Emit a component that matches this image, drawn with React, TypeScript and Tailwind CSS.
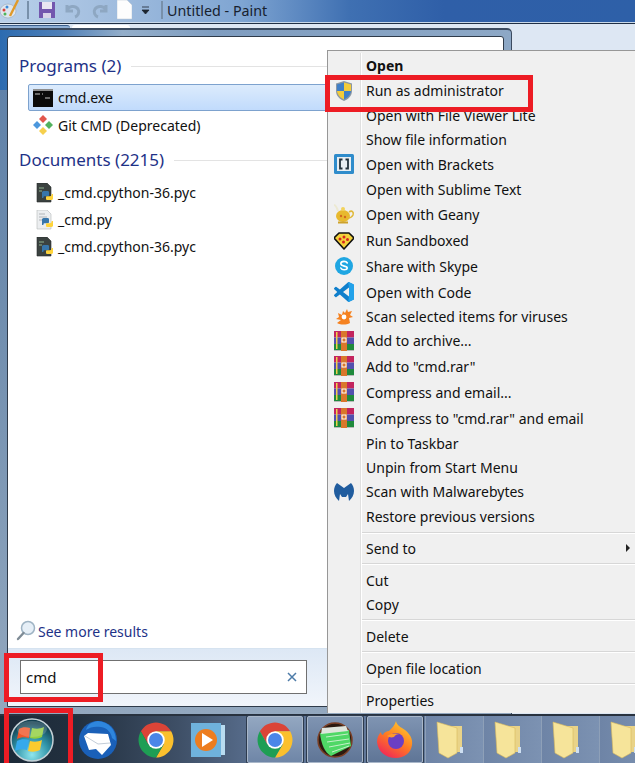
import React from 'react';

const sans = 'font-["Noto_Sans","Open_Sans",sans-serif]';

const Chrome = ({ size = 36 }: { size?: number }) => (
  <svg width={size} height={size} viewBox="0 0 48 48">
    <path d="M6.7 14A20 20 0 0 1 41.3 14L24 14 15.3 29Z" fill="#db4437" />
    <path d="M41.3 14A20 20 0 0 1 24 44L32.7 29 24 14Z" fill="#fbc02d" />
    <path d="M24 44A20 20 0 0 1 6.7 14L15.3 29 32.7 29Z" fill="#1e9e54" />
    <circle cx="24" cy="24" r="10" fill="#fff" />
    <circle cx="24" cy="24" r="8" fill="#4a86e8" />
  </svg>
);

const Folder = () => (
  <svg width="28" height="38" viewBox="0 0 28 38">
    <path d="M9 5h17v26H9z" fill="#e9d388" />
    <path d="M24 26h3v6h-3z" fill="#cfe0f2" />
    <path d="M1 1l20 6v25l-9 5-9-5z" fill="#f6e49a" stroke="#d9b95c" strokeWidth="0.6" />
  </svg>
);

const PyFile = ({ dark }: { dark?: boolean }) => (
  <svg width="18" height="20" viewBox="0 0 18 20">
    <path d="M1 0h10l4 4v15H1z" fill={dark ? '#3b4240' : '#eceef0'} stroke={dark ? '#2a2e2d' : '#b5b8bb'} strokeWidth="0.6" />
    {!dark && <path d="M3 4h6M3 7h8M3 10h4" stroke="#b0b4b8" />}
    {dark && <path d="M3 5h5M3 8h3" stroke="#8fb28f" />}
    <path d="M6 14V9.5c0-1 1-1.5 2.5-1.5h3c1 0 1.5.5 1.5 1.5V12c0 .8-.6 1.2-1.4 1.2H9c-1 0-1.6.4-1.6 1.3V15H6z" fill="#3776ab" />
    <path d="M17 11v4.500c0 1-1 1.500-2.500 1.500h-3c-1 0-1.500-.5-1.500-1.500V14c0-.5.5-.8 1.200-.8H14c1 0 1.600-.6 1.600-1.400V11H17z" fill="#ffd43b" />
  </svg>
);

const Rar = () => (
  <svg width="20" height="20" viewBox="0 0 20 20">
    <rect x="0" y="0" width="20" height="6.500" fill="#c3245e" />
    <rect x="0" y="6.500" width="20" height="6.500" fill="#5250ae" />
    <rect x="0" y="13" width="20" height="6" fill="#1f8a3c" />
    <rect x="0" y="19" width="20" height="1" fill="#b9b9b9" />
    <rect x="2" y="1" width="1.500" height="17" fill="#f2d04a" />
    <rect x="7" y="0" width="6" height="20" fill="#d9772b" />
    <rect x="8" y="7" width="4" height="4" fill="none" stroke="#fff" />
  </svg>
);

const Shield = () => (
  <svg width="18" height="20" viewBox="0 0 18 20">
    <path d="M9 0l8 2.500V10c0 5-4 8.500-8 10-4-1.500-8-5-8-10V2.500z" fill="#8b97a3" />
    <path d="M9 1.500V10H2V3.500z" fill="#3f7fc8" />
    <path d="M9 1.500V10h7V3.500z" fill="#f3cb3a" />
    <path d="M9 10v8.500C5.500 17 2.500 14 2 10z" fill="#f3cb3a" />
    <path d="M9 10v8.500c3.500-1.500 6.500-4.500 7-8.500z" fill="#3f7fc8" />
  </svg>
);

const Brackets = () => (
  <svg width="20" height="20" viewBox="0 0 20 20">
    <rect width="20" height="20" rx="1.500" fill="#2f8ccb" />
    <rect x="3" y="3" width="14" height="14" fill="#e8eef2" />
    <path d="M8.500 5.500H6v9h2.500M11.500 5.500H14v9h-2.500" fill="none" stroke="#23323c" strokeWidth="1.800" />
  </svg>
);

const Geany = () => (
  <svg width="22" height="20" viewBox="0 0 22 20">
    <path d="M1 1c2 0 3 3 4 6" fill="none" stroke="#ece9d2" strokeWidth="2" />
    <ellipse cx="10" cy="12" rx="7" ry="6" fill="#e8b92e" />
    <path d="M16 8c3-2 5 0 4 3-1 2-3 3-5 3" fill="none" stroke="#e0b93a" strokeWidth="1.600" />
    <circle cx="10" cy="5" r="2" fill="#f2d35c" />
    <circle cx="8" cy="12" r="1.200" fill="#d2691e" />
    <circle cx="12" cy="13" r="1.200" fill="#d2691e" />
    <rect x="5" y="17.500" width="10" height="2" fill="#cda22c" />
  </svg>
);

const Sandboxie = () => (
  <svg width="20" height="20" viewBox="0 0 20 20">
    <path d="M10 19L0 8l5-5h10l5 5z" fill="#f4d23c" stroke="#111" strokeWidth="1.600" strokeLinejoin="round" />
    <g fill="#d7261e">
      <circle cx="10" cy="7" r="1.500" />
      <circle cx="6" cy="9" r="1.500" />
      <circle cx="13.500" cy="9.500" r="1.500" />
      <circle cx="9.500" cy="12" r="1.500" />
    </g>
  </svg>
);

const Skype = () => (
  <svg width="18" height="18" viewBox="0 0 18 18">
    <circle cx="9" cy="9" r="9" fill="#1fa6e2" />
    <path d="M12.300 6c-.6-1.100-1.800-1.600-3.300-1.600-1.800 0-3.200.9-3.200 2.400 0 3 6.400 1.700 6.400 4.300 0 1.100-1.200 1.700-3.100 1.700-1.500 0-2.700-.6-3.300-1.800" fill="none" stroke="#fff" strokeWidth="1.600" strokeLinecap="round" />
  </svg>
);

const VsCode = () => (
  <svg width="20" height="20" viewBox="0 0 24 24">
    <path
      d="M23.15 2.587L18.21.21a1.494 1.494 0 0 0-1.705.29l-9.46 8.63-4.12-3.128a.999.999 0 0 0-1.276.057L.327 7.261A1 1 0 0 0 .326 8.74L3.899 12 .326 15.26a1 1 0 0 0 .001 1.479L1.65 17.94a.999.999 0 0 0 1.276.057l4.12-3.128 9.46 8.63a1.492 1.492 0 0 0 1.704.29l4.942-2.377A1.5 1.5 0 0 0 24 20.06V3.939a1.5 1.5 0 0 0-.85-1.352zm-5.146 14.861L10.826 12l7.178-5.448v10.896z"
      fill="#0f7fcc"
    />
    <path d="M17 .3l1.200-.1 4.950 2.390A1.500 1.500 0 0 1 24 3.940v16.120a1.500 1.500 0 0 1-.85 1.350l-4.940 2.380-1.200-.1 1-6.240V6.550z" fill="#22a2ea" />
  </svg>
);

const Avast = () => (
  <svg width="18" height="16" viewBox="0 0 18 16">
    <path d="M12 0l1 3 4-1-2 4 3 2-4 1 1 5c-4 2-9 2-13 0l4-3-5-1 3-2-1-4 4 2 1-4 2 2z" fill="#f58220" />
    <circle cx="9" cy="8" r="2.400" fill="#fff" />
  </svg>
);

const Malwarebytes = () => (
  <svg width="20" height="18" viewBox="0 0 20 18">
    <path d="M3 0l7 5 7-5c2 2 3 5 3 8 0 4-2 7-5 10l-1-7-2 3H8l-2-3-1 7C2 15 0 12 0 8c0-3 1-6 3-8z" fill="#205c9e" />
  </svg>
);

const CmdIcon = () => (
  <svg width="20" height="18" viewBox="0 0 20 18">
    <rect width="20" height="18" fill="#0b0b0b" />
    <rect x="0" y="0" width="20" height="2" fill="#8d8d8d" />
    <path d="M2 5h5M9 5h1M12 9h5" stroke="#c8c8c8" strokeWidth="1.200" />
  </svg>
);

const GitIcon = () => (
  <svg width="20" height="20" viewBox="0 0 20 20">
    <path d="M10 0l4 4-4 4-4-4z" fill="#e2574c" />
    <path d="M16 6l4 4-4 4-4-4z" fill="#52b25f" />
    <path d="M10 12l4 4-4 4-4-4z" fill="#f6d04d" />
    <path d="M4 6l4 4-4 4-4-4z" fill="#4c97dd" />
  </svg>
);

const menuItems: { label?: string; h: string; icon?: React.ReactNode; bold?: boolean; arrow?: boolean }[] = [
  { label: 'Open', h: 'h-[25px]', bold: true },
  { label: 'Run as administrator', h: 'h-[25px]', icon: <Shield /> },
  { label: 'Open with File Viewer Lite', h: 'h-[24px]' },
  { label: 'Show file information', h: 'h-[24px]' },
  { label: 'Open with Brackets', h: 'h-[26px]', icon: <Brackets /> },
  { label: 'Open with Sublime Text', h: 'h-[24px]' },
  { label: 'Open with Geany', h: 'h-[26px]', icon: <Geany /> },
  { label: 'Run Sandboxed', h: 'h-[26px]', icon: <Sandboxie /> },
  { label: 'Share with Skype', h: 'h-[26px]', icon: <Skype /> },
  { label: 'Open with Code', h: 'h-[26px]', icon: <VsCode /> },
  { label: 'Scan selected items for viruses', h: 'h-[23px]', icon: <Avast /> },
  { label: 'Add to archive...', h: 'h-[25px]', icon: <Rar /> },
  { label: 'Add to "cmd.rar"', h: 'h-[26px]', icon: <Rar /> },
  { label: 'Compress and email...', h: 'h-[26px]', icon: <Rar /> },
  { label: 'Compress to "cmd.rar" and email', h: 'h-[26px]', icon: <Rar /> },
  { label: 'Pin to Taskbar', h: 'h-[24px]' },
  { label: 'Unpin from Start Menu', h: 'h-[24px]' },
  { label: 'Scan with Malwarebytes', h: 'h-[25px]', icon: <Malwarebytes /> },
  { label: 'Restore previous versions', h: 'h-[25px]' },
  { h: 'h-[7px]' },
  { label: 'Send to', h: 'h-[24px]', arrow: true },
  { h: 'h-[8px]' },
  { label: 'Cut', h: 'h-[24px]' },
  { label: 'Copy', h: 'h-[24px]' },
  { h: 'h-[8px]' },
  { label: 'Delete', h: 'h-[24px]' },
  { h: 'h-[8px]' },
  { label: 'Open file location', h: 'h-[24px]' },
  { h: 'h-[8px]' },
  { label: 'Properties', h: 'h-[24px]' },
];

const ContextMenu = () => (
  <div className="absolute left-[327px] top-[50px] flex h-[663px] w-[308px] flex-col overflow-hidden border-t border-l border-[#979797] bg-[#f0f0f0] pt-[2px]">
    {menuItems.map((item, i) => (
      <div key={i} className={`flex shrink-0 ${item.h}`}>
        <div className="flex w-[33px] shrink-0 items-center justify-center border-r border-[#e0e0e0]">{item.icon}</div>
        {item.label ? (
          <div className="flex flex-1 items-center justify-between border-l border-white pl-[4px] pr-[5px]">
            <span className={`text-[14px] text-[#111] ${item.bold ? 'font-bold' : ''}`}>{item.label}</span>
            {item.arrow && <span className="h-0 w-0 border-y-[4px] border-l-[4px] border-y-transparent border-l-[#222]" />}
          </div>
        ) : (
          <div className="flex flex-1 items-center border-l border-white">
            <div className="h-[2px] w-full border-t border-b border-t-[#d7d7d7] border-b-white" />
          </div>
        )}
      </div>
    ))}
    <div className="flex flex-1">
      <div className="w-[33px] shrink-0 border-r border-[#e0e0e0]" />
    </div>
  </div>
);

const SectionHeading = ({ label, className }: { label: string; className: string }) => (
  <div className={`flex h-[26px] items-center gap-[10px] ${className}`}>
    <span className="whitespace-nowrap text-[17px] text-[#1e3287]">{label}</span>
    <div className="h-px flex-1 bg-[#e3e3e3]" />
  </div>
);

const ResultRow = ({ icon, label, className }: { icon: React.ReactNode; label: string; className: string }) => (
  <div className={`ml-[9px] flex h-[27px] items-center text-[14px] text-[#111] ${className}`}>
    <span className="flex w-[30px] shrink-0 items-center justify-center pl-[3px]">{icon}</span>
    <span>{label}</span>
  </div>
);

const StartMenu = () => (
  <div className="h-full w-[512px] rounded-tr-[5px] border-t-2 border-r border-[#3b4b60] pt-[6px] pr-[7px] pb-[7px] pl-[7px] [background:linear-gradient(90deg,#2c6bb0_0%,#4f80b8_12%,#93aeca_24%,#7f9dc0_42%,#8da8c6_100%)_0_0/100%_60px_no-repeat,linear-gradient(180deg,#5c7fa8_0%,#6f8dae_40%,#93a8bf_100%)]">
    <div className="flex h-full flex-col overflow-hidden rounded-t-[3px] border border-[#2f3b4a] bg-white">
      <div className="flex flex-1 flex-col pt-[16px] pl-[11px]">
        <SectionHeading label="Programs (2)" className="" />
        <div className="mt-[5px] ml-[9px] flex h-[27px] items-center rounded-[2px] border border-[#7da2ce] bg-[linear-gradient(180deg,#dcebfc_0%,#c1dbfc_100%)] text-[14px] text-[#111]">
          <span className="ml-[4px] mr-[5px] flex w-[20px] justify-center"><CmdIcon /></span>
          <span>cmd.exe</span>
        </div>
        <div className="mt-[1px] ml-[9px] flex h-[26px] items-center text-[14px] text-[#111]">
          <span className="ml-[5px] flex w-[20px] justify-center"><GitIcon /></span>
          <span className="ml-[5px]">Git CMD (Deprecated)</span>
        </div>
        <SectionHeading label="Documents (2215)" className="mt-[9px]" />
        <ResultRow icon={<PyFile dark />} label="_cmd.cpython-36.pyc" className="mt-[6px]" />
        <ResultRow icon={<PyFile />} label="_cmd.py" className="" />
        <ResultRow icon={<PyFile dark />} label="_cmd.cpython-36.pyc" className="" />
        <div className="mt-auto mb-[5px] flex h-[24px] items-center text-[14px] text-[#1e3287]">
          <svg className="-ml-[3px] mr-[2px]" width="20" height="22" viewBox="0 0 20 22">
            <circle cx="12" cy="8" r="6.500" fill="#e6eff7" stroke="#9fb4c4" strokeWidth="1.500" />
            <path d="M7.500 13L2 19" stroke="#7f8c96" strokeWidth="2.400" strokeLinecap="round" />
          </svg>
          <span>See more results</span>
        </div>
      </div>
      <div className="h-[58px] border-t border-[#d6e3f0] bg-[linear-gradient(180deg,#dde8f5_0%,#f1f5fb_100%)] pt-[11px] pl-[12px]">
        <div className="flex h-[34px] w-[287px] items-center justify-between border border-[#707070] bg-white pr-[8px] pl-[5px]">
          <span className="text-[15px] text-[#111]">cmd</span>
          <svg width="12" height="12" viewBox="0 0 12 12">
            <path d="M2 2l8 8M10 2l-8 8" stroke="#4d7ba8" strokeWidth="1.500" />
          </svg>
        </div>
      </div>
    </div>
  </div>
);

const TitleBar = () => (
  <div className="flex h-[24px] shrink-0 items-center border-b border-[#1f2f44] bg-[linear-gradient(90deg,#b9d0ea_0%,#a5c0e0_15%,#7fa5d2_38%,#3f70b2_55%,#2f5fa8_70%,#2e60a8_100%)] pb-[3px] shadow-[inset_0_-1px_0_#c9d9ea]">
    <svg className="mr-[7px]" width="20" height="20" viewBox="0 0 20 20">
      <ellipse cx="8" cy="11" rx="8" ry="7" fill="#dfe6ee" stroke="#9aa8b8" strokeWidth="0.600" />
      <circle cx="4" cy="10" r="1.500" fill="#d9413b" />
      <circle cx="7" cy="7" r="1.500" fill="#3b88d8" />
      <circle cx="5" cy="14" r="1.500" fill="#4eb45a" />
      <path d="M18 0L10 16" stroke="#e09a2a" strokeWidth="2.400" />
    </svg>
    <div className="h-[18px] w-[2px] bg-[#7890aa]" />
    <svg className="ml-[9px]" width="18" height="18" viewBox="0 0 18 18">
      <path d="M1 1h16v16H1z" fill="#7357ae" />
      <rect x="4" y="1" width="10" height="7" fill="#e9e6f2" />
      <rect x="5" y="12" width="8" height="5" fill="#d9d4e8" />
    </svg>
    <svg className="ml-[8px]" width="18" height="18" viewBox="0 0 18 18">
      <path d="M3 4v6h6M3 9c2-4 8-5 11-1 2 3 0 7-3 8" fill="none" stroke="#8ea7c2" strokeWidth="3" />
    </svg>
    <svg className="ml-[9px]" width="18" height="18" viewBox="0 0 18 18">
      <path d="M15 4v6H9M15 9c-2-4-8-5-11-1-2 3 0 7 3 8" fill="none" stroke="#8ea7c2" strokeWidth="3" />
    </svg>
    <svg className="ml-[8px]" width="15" height="20" viewBox="0 0 15 20">
      <path d="M0 0h10l5 5v14H0z" fill="#fdfdfd" stroke="#b8c4d0" strokeWidth="0.500" />
    </svg>
    <svg className="ml-[9px]" width="9" height="9" viewBox="0 0 9 9">
      <path d="M1 1h7M1 4h7L4.500 8z" fill="#1c2530" stroke="#1c2530" strokeWidth="0.800" />
    </svg>
    <div className="ml-[11px] h-[18px] w-[2px] bg-[#7890aa]" />
    <span className="ml-[4px] mt-[1px] text-[14.300px] text-[#17212e]">Untitled - Paint</span>
  </div>
);

const Orb = () => (
  <svg width="44" height="44" viewBox="0 0 44 44">
    <defs>
      <radialGradient id="orb" cx="50%" cy="85%" r="75%">
        <stop offset="0%" stopColor="#8fe6ee" />
        <stop offset="55%" stopColor="#2f93a8" />
        <stop offset="100%" stopColor="#123f50" />
      </radialGradient>
    </defs>
    <circle cx="22" cy="22" r="21" fill="url(#orb)" stroke="#c3d0d6" strokeWidth="1.500" />
    <path d="M9 11c3-2 7-2 11-1l-1 10c-4-1-8-1-12 1z" fill="#f0572a" />
    <path d="M22 10c4 1 8 1 12-1l-2 10c-4 2-8 2-12 1z" fill="#92cf3f" />
    <path d="M7 23c4-2 8-2 12-1l-2 10c-4-1-8-1-12 1z" fill="#36a9ec" />
    <path d="M20 23c4 1 8 1 12-1l-2 10c-4 2-8 2-12 1z" fill="#fbcb2e" />
    <ellipse cx="22" cy="11" rx="15" ry="8" fill="#fff" opacity="0.180" />
  </svg>
);

const Thunderbird = () => (
  <svg width="40" height="40" viewBox="0 0 40 40">
    <circle cx="20" cy="20" r="19" fill="#1a60b8" />
    <path d="M20 1c-7 1-11 4-12 9 4-3 9-4 15-3 6 1 10 5 11 11l4 3c0-11-7-19-18-20z" fill="#2e86dd" />
    <path d="M6 16l4-3 20 1 3 11-9 10-6-6-7 1z" fill="#fff" />
    <path d="M7 16l13 8 12-1" fill="none" stroke="#c3cdd8" strokeWidth="1" />
  </svg>
);

const Player = () => (
  <svg width="34" height="36" viewBox="0 0 34 36">
    <rect x="6" y="3" width="28" height="30" fill="#b9dcf0" />
    <rect x="0" y="1" width="30" height="34" fill="#6fb2dc" />
    <circle cx="15" cy="18" r="11" fill="#ed7d1f" />
    <path d="M11 11l11 7-11 7z" fill="#fff" />
  </svg>
);

const Notepad = () => (
  <svg width="36" height="36" viewBox="0 0 36 36">
    <circle cx="18" cy="18" r="17" fill="#2c1a10" stroke="#7a3f25" strokeWidth="1.500" />
    <path d="M3 11l29-3 2 16-20 10C8 31 4 22 3 11z" fill="#4fd866" />
    <path d="M9 15l22-3M10 20l22-3M12 25l21-4M15 30l17-6" stroke="#c4f0c8" />
    <path d="M5 6l24-2 2 5-27 3z" fill="#dfe5dc" />
  </svg>
);

const Firefox = () => (
  <svg width="38" height="38" viewBox="0 0 38 38">
    <defs>
      <linearGradient id="ff" x1="0.800" y1="0" x2="0.200" y2="1">
        <stop offset="0%" stopColor="#ffd02e" />
        <stop offset="50%" stopColor="#ff7a22" />
        <stop offset="100%" stopColor="#f0215c" />
      </linearGradient>
    </defs>
    <path d="M20 0c1 5 5 6 9 9 5 4 8 9 7 15-1 8-8 13-16 13C10 37 2 31 1 21c0-5 2-8 4-10 0 2 1 3 2 3 1-3 4-4 6-4 3-3 6-6 7-10z" fill="url(#ff)" />
    <circle cx="20" cy="20" r="8" fill="#6b3fc4" />
    <path d="M11 15c4-3 9-3 13-2-3 0-5 1-6 3-3 1-5 0-7-1z" fill="#ff9a2e" />
  </svg>
);

const TaskButton = ({ children, active }: { children: React.ReactNode; active?: boolean }) => (
  <div
    className={`flex h-[47px] w-[56px] shrink-0 items-center justify-center rounded-[2px] border border-[#a9b7c9] shadow-[0_0_0_1px_#2d3b4e] ${
      active ? 'bg-[linear-gradient(180deg,#93a7c1_0%,#6f86a7_100%)]' : 'bg-[linear-gradient(180deg,#7f94b2_0%,#5f7596_100%)]'
    }`}
  >
    {children}
  </div>
);

const FolderButton = () => (
  <div className="flex h-[47px] w-[58px] shrink-0 items-center border-l border-[#8ea0b8] bg-[linear-gradient(90deg,#6e84a6_0%,#7c92b2_100%)] pl-[10px]">
    <Folder />
  </div>
);

const Taskbar = () => (
  <div className="flex h-[49px] shrink-0 items-end border-t-2 border-[#28323f] bg-[linear-gradient(90deg,#1b2937_0%,#22303f_12%,#3e4f66_28%,#5d7394_42%,#6d84a6_100%)]">
    <div className="flex h-full w-[64px] shrink-0 items-center justify-center"><Orb /></div>
    <div className="flex h-full w-[68px] shrink-0 items-center justify-center"><Thunderbird /></div>
    <div className="flex h-full w-[48px] shrink-0 items-center justify-center"><Chrome size={42} /></div>
    <div className="ml-[4px] flex h-full w-[48px] shrink-0 items-center justify-center"><Player /></div>
    <div className="ml-[15px] flex gap-[4px]">
      <TaskButton active><Chrome size={42} /></TaskButton>
      <TaskButton><Notepad /></TaskButton>
      <TaskButton><Firefox /></TaskButton>
    </div>
    <div className="ml-[2px] flex">
      <FolderButton />
      <FolderButton />
      <FolderButton />
      <FolderButton />
    </div>
  </div>
);

const App = () => {
  return (
    <div className={`relative flex h-[763px] w-[635px] flex-col overflow-hidden bg-[#dde7f3] ${sans}`}>
      <TitleBar />
      <div className="flex h-[4px] shrink-0 items-end">
        <div className="h-[3px] w-[70px] rounded-tr-[3px] border-t border-[#3b5f8c] bg-[#8fb0d6]" />
        <div className="ml-[2px] h-[3px] w-[58px] rounded-t-[3px] bg-white" />
      </div>
      <div className="min-h-0 flex-1">
        <StartMenu />
      </div>
      <Taskbar />
      <ContextMenu />
      {/* red marks drawn on top of the screenshot */}
      <div className="absolute left-[325px] top-[75px] h-[37px] w-[208px] border-[5px] border-[#ed1c24]" />
      <div className="absolute left-[4px] top-[653px] h-[49px] w-[99px] border-[5px] border-[#ed1c24]" />
      <div className="absolute left-[4px] top-[708px] h-[60px] w-[69px] border-[5px] border-[#ed1c24]" />
    </div>
  );
};

export default App;
